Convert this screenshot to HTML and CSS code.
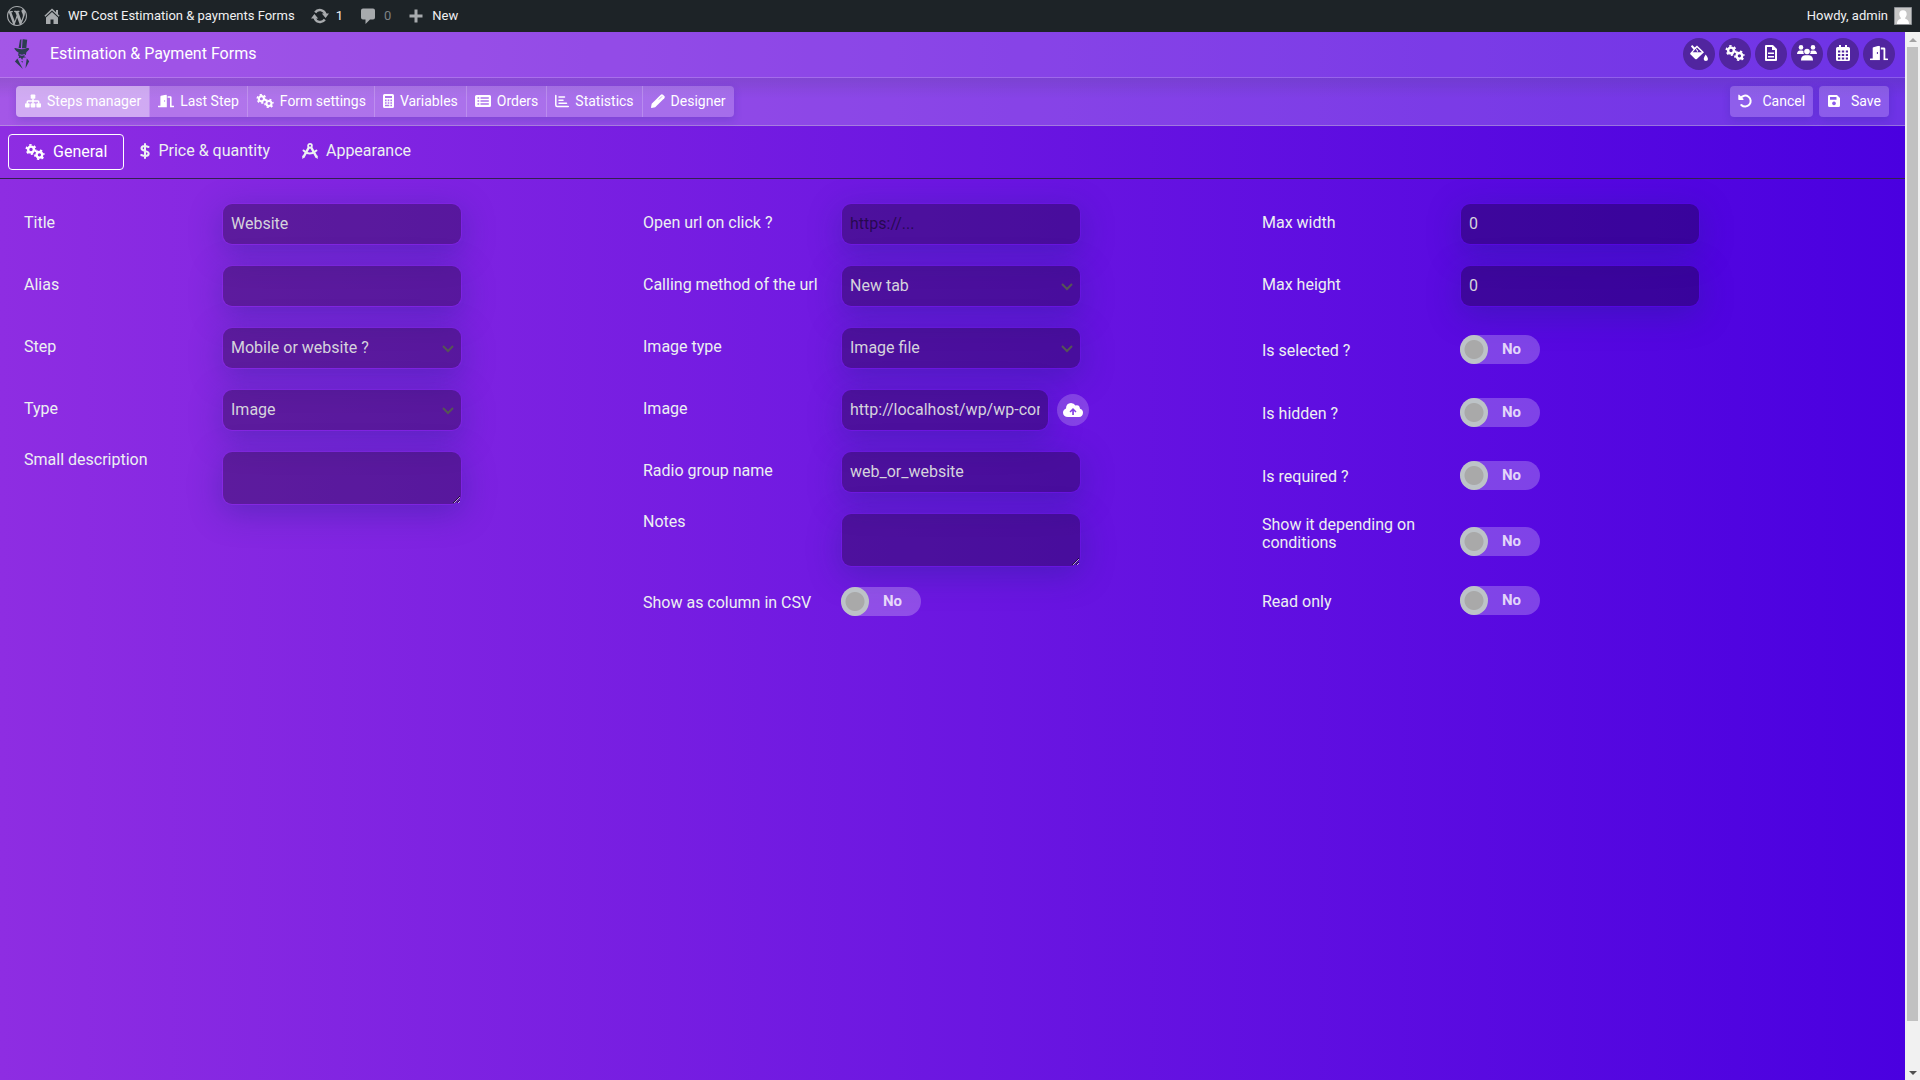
FILE: index.html
```html
<!DOCTYPE html>
<html lang="en">
<head>
<meta charset="utf-8">
<title>Estimation &amp; Payment Forms</title>
<link rel="stylesheet" href="styles.css">
</head>
<body>
<svg class="sprite" aria-hidden="true">
  <symbol id="gears" viewBox="0 0 20 16">
    <g fill="none" stroke="currentColor">
      <circle cx="6" cy="5.5" r="2.9" stroke-width="2.4"/>
      <circle cx="6" cy="5.5" r="4.6" stroke-width="1.8" stroke-dasharray="2.4 2.417"/>
      <circle cx="14.4" cy="10.8" r="2.8" stroke-width="2.3"/>
      <circle cx="14.4" cy="10.8" r="4.4" stroke-width="1.8" stroke-dasharray="2.3 2.308" stroke-dashoffset="2.3"/>
    </g>
  </symbol>
  <symbol id="door" viewBox="0 0 640 512">
    <path fill="currentColor" d="M624 448h-80V113.45C544 86.19 522.47 64 496 64H384v64h96v384h144c8.84 0 16-7.16 16-16v-32c0-8.84-7.16-16-16-16zM312.24 1.01l-192 49.74C105.99 54.44 96 67.54 96 82.51V448H16c-8.84 0-16 7.16-16 16v32c0 8.84 7.16 16 16 16h336V33.18c0-21.58-19.56-37.41-39.76-32.17zM264 288c-13.25 0-24-14.33-24-32s10.75-32 24-32 24 14.33 24 32-10.75 32-24 32z"/>
  </symbol>
</svg>

<nav class="adminbar" aria-label="Site">
  <a href="#" aria-label="About WordPress"><svg class="i20" viewBox="0 0 20 20"><path fill="currentColor" d="M20 10c0-5.51-4.49-10-10-10C4.48 0 0 4.49 0 10c0 5.52 4.48 10 10 10 5.51 0 10-4.48 10-10zM7.78 15.37L4.37 6.22c.55-.02 1.17-.08 1.17-.08.5-.06.44-1.13-.06-1.11 0 0-1.45.11-2.37.11-.18 0-.37 0-.58-.01C4.12 2.69 6.87 1.11 10 1.11c2.33 0 4.45.87 6.05 2.34-.68-.11-1.65.39-1.65 1.58 0 .74.45 1.36.9 2.1.35.61.55 1.36.55 2.46 0 1.49-1.4 5-1.4 5l-3.03-8.37c.54-.02.82-.17.82-.17.5-.05.44-1.25-.06-1.22 0 0-1.44.12-2.38.12-.87 0-2.33-.12-2.33-.12-.5-.03-.56 1.2-.06 1.22l.92.08 1.26 3.41zM17.41 10c.24-.64.74-1.87.43-4.25.7 1.29 1.05 2.71 1.05 4.25 0 3.29-1.73 6.24-4.4 7.78.97-2.59 1.94-5.2 2.92-7.78zM6.1 18.09C3.12 16.65 1.11 13.53 1.11 10c0-1.3.23-2.48.72-3.59C3.25 10.3 4.67 14.2 6.1 18.09zm4.03-6.63l2.58 6.98c-.86.29-1.76.45-2.71.45-.79 0-1.57-.11-2.29-.33.81-2.38 1.62-4.74 2.42-7.1z"/></svg></a>
  <a href="#"><svg class="i20" viewBox="0 0 20 20"><path fill="currentColor" d="M10 2.5l-7.6 7.2 1 1.1L10 4.6l6.6 6.2 1-1.1-1.6-1.5V4h-2v2.300zM4 11.5V18h4.500v-4.500h3V18H16v-6.500L10 6z"/></svg><span>WP Cost Estimation &amp; payments Forms</span></a>
  <a href="#"><svg class="i20" viewBox="0 0 20 20"><g fill="none" stroke="currentColor" stroke-width="2.500"><path d="M4.600 11.500A5.700 5.700 0 0 0 14.800 13.600"/><path d="M15.400 8.500A5.700 5.700 0 0 0 5.200 6.400"/></g><path fill="currentColor" d="M1 12.500L4.400 8l3.800 4.500zM19 7.500L15.600 12l-3.800-4.500z"/></svg><span>1</span></a>
  <a href="#" class="muted"><svg class="i20" viewBox="0 0 20 20"><path fill="currentColor" d="M5 2.500h10a2 2 0 0 1 2 2v7a2 2 0 0 1-2 2h-3L7.500 18v-4.500H5a2 2 0 0 1-2-2v-7a2 2 0 0 1 2-2z"/></svg><span>0</span></a>
  <a href="#"><svg class="i20" viewBox="0 0 20 20"><path fill="currentColor" d="M8.500 3.500h3v5h5v3h-5v5h-3v-5h-5v-3h5z"/></svg><span>New</span></a>
  <a href="#" class="account"><span>Howdy, admin</span><svg class="avatar" viewBox="0 0 18 18"><path fill="#c6c6c6" stroke="#8c8f94" d="M.5.5h17v17H.5z"/><path fill="#fff" d="M9 3.200c2.300 0 3.700 1.700 3.700 3.900 0 1.500-.6 2.800-1.500 3.600v1c2 .5 3.800 1.700 3.800 5.300H3c0-3.600 1.800-4.800 3.800-5.300v-1c-.9-.8-1.500-2.100-1.500-3.600C5.300 4.900 6.700 3.200 9 3.200z"/></svg></a>
</nav>

<div class="frame">
<div class="app">
  <header class="topbar">
    <svg class="logo" viewBox="0 0 16 30"><g fill="#2c3e50"><path d="M6 .8L7.500.3 7 9H4.600zM8.600.2Q11 0 13.200.8L12.300 9.300H8z"/><path d="M.2 9.500Q1 8.400 3 9.400q5.500 1.800 10-.4 3-.5 2 1.600-2.500 3.600-6.500 4Q3.500 14.400.2 9.500z"/><path d="M4.500 13.500l8-1-.6 3.200-2.300 1.200 2.600 1.300-3.200.6L8.200 21l-1.400-2.200-2.300.4.700-1.800-1-1z"/><path d="M3.400 19.500L.9 22.500l8 7.400-2.800-5zM12.800 19.500l2.400 2.800-3.700 7 .6-5.300zM7.300 22h1.500l-.5 2z"/></g><path fill="none" stroke="#9f52e8" d="M5.500 15.700l2.500.6 2.800-.8"/></svg>
    <h1>Estimation &amp; Payment Forms</h1>
    <div class="shortcuts">
      <button type="button" aria-label="Design"><svg class="i18" viewBox="0 0 18 16"><path fill="currentColor" fill-rule="evenodd" d="M1 1.200L2.200 0 4.700 2.500 7 .4l7 6.800L6.900 14q-.9.700-1.800 0L.6 9.600q-.9-1 0-1.900l2.900-3.300-2.500-3zM5.800 3.700L2.700 7.300h9.200L7 2.600l-1 1 2.300 2.300-1.100 1.100zM15.700 9.500q2.300 3 2.300 4.400 0 1.900-2.200 2-2-.1-2.100-2 0-1.400 2-4.400z"/></svg></button>
      <button type="button" aria-label="Settings"><svg class="i20" viewBox="0 0 20 16"><use href="#gears"/></svg></button>
      <button type="button" aria-label="Documents"><svg class="i16" viewBox="0 0 16 16"><path fill="none" stroke="currentColor" stroke-width="2" stroke-linejoin="round" d="M3 1h6.500L13 4.500V15H3z"/><path fill="currentColor" d="M9 1v4h4zM5 7.500h6V9H5zM5 11h6v1.500H5z"/></svg></button>
      <button type="button" aria-label="Customers"><svg class="i20" viewBox="0 0 20 16"><g fill="currentColor"><circle cx="4" cy="2.400" r="2.300"/><circle cx="16" cy="2.400" r="2.300"/><circle cx="10" cy="6.500" r="2.800"/><path d="M0 9q.2-3.500 3-3.600h2q.8 0 1.500.5Q6 7.500 7 9zM20 9q-.2-3.500-3-3.600h-2q-.8 0-1.500.5Q14 7.500 13 9zM4 15.500q0-5 4-5.200h4q4 .2 4 5.200z"/></g></svg></button>
      <button type="button" aria-label="Calendar"><svg class="i16" viewBox="0 0 16 16"><path fill="currentColor" fill-rule="evenodd" d="M4 0h2v2h4V0h2v2h1.500Q15 2 15 3.500v11q0 1.500-1.500 1.500h-11Q1 16 1 14.500v-11Q1 2 2.500 2H4zM3 5.500v2h2.300v-2zm3.800 0v2h2.400v-2zm4 0v2H13v-2zM3 9v2h2.300V9zm3.800 0v2h2.400V9zm4 0v2H13V9zM3 12.500v2h2.300v-2zm3.800 0v2h2.400v-2zm4 0v2H13v-2z"/></svg></button>
      <button type="button" aria-label="Exit"><svg class="i18" viewBox="0 0 640 512"><use href="#door"/></svg></button>
    </div>
  </header>

  <div class="toolbar">
    <div class="group">
      <button type="button" class="active"><svg class="i16" viewBox="0 0 16 14"><g fill="currentColor"><rect x="5.700" y=".5" width="4.600" height="4.300" rx=".8"/><rect y="9.200" width="4.600" height="4.300" rx="1"/><rect x="5.700" y="9.200" width="4.600" height="4.300" rx="1"/><rect x="11.400" y="9.200" width="4.600" height="4.300" rx="1"/></g><path fill="none" stroke="currentColor" stroke-width="1.500" d="M8 4.500v5M2.300 9.500V7.800q0-.9.900-.9h9.600q.9 0 .9.900v1.700"/></svg>Steps manager</button>
      <button type="button"><svg class="i16" viewBox="0 0 640 512"><use href="#door"/></svg>Last Step</button>
      <button type="button"><svg class="i18" viewBox="0 0 20 16"><use href="#gears"/></svg>Form settings</button>
      <button type="button"><svg class="i11" viewBox="0 0 11 14"><path fill="currentColor" fill-rule="evenodd" d="M1.500 0h8Q11 0 11 1.500v11Q11 14 9.500 14h-8Q0 14 0 12.500v-11Q0 0 1.500 0zM2 2v2h7V2zM2 5.600v1.600h1.600V5.600zm2.700 0v1.600h1.600V5.600zm2.700 0v1.600H9V5.600zM2 8.200v1.600h1.600V8.200zm2.700 0v1.600h1.600V8.200zm2.700 0v1.600H9V8.200zM2 10.800v1.400h4.300v-1.400zm5.400 0v1.400H9v-1.400z"/></svg>Variables</button>
      <button type="button"><svg class="i16" viewBox="0 0 16 14"><path fill="currentColor" fill-rule="evenodd" d="M1.500 1h13Q16 1 16 2.500v9q0 1.500-1.500 1.500h-13Q0 13 0 11.500v-9Q0 1 1.500 1zM2.500 3.200v1.600h1.700V3.200zm3 0v1.600h8.300V3.200zm-3 3v1.600h1.700V6.200zm3 0v1.600h8.300V6.200zm-3 3v1.600h1.700V9.200zm3 0v1.600h8.300V9.200z"/></svg>Orders</button>
      <button type="button"><svg class="i14" viewBox="0 0 14 14"><path fill="none" stroke="currentColor" stroke-width="1.500" stroke-linecap="round" d="M.8 1.500V11q0 1.500 1.500 1.500h11M4 3h5.500M4 6.200h4M4 9.300h7.500"/></svg>Statistics</button>
      <button type="button"><svg class="i14" viewBox="0 0 14 14"><path fill="currentColor" d="M.7 9.700L9.800.7q1.100-1 2.200 0l1.300 1.300q1 1.100 0 2.200L4.200 13.300.6 14q-.7 0-.6-.7z"/><path stroke="#a973e8" stroke-width=".7" d="M7.800 5.600l3.200-3.200" fill="none"/></svg>Designer</button>
    </div>
    <div class="actions">
      <button type="button"><svg class="i14" viewBox="0 0 14 14"><path fill="none" stroke="currentColor" stroke-width="2" stroke-linecap="round" d="M2.600 4A5.500 5.500 0 1 1 3.300 11"/><path fill="currentColor" d="M.3 1q.7-.8 1.200 0l4 4q.5.800-.5.900H.9Q.3 5.900.3 5.200z"/></svg>Cancel</button>
      <button type="button"><svg class="i14" viewBox="0 0 14 14"><path fill="currentColor" fill-rule="evenodd" d="M2 1h8l3 3v7.500q0 1.500-1.500 1.500h-9Q1 13 1 11.500V2.500Q1 1 2 1zm1 2v2.800h6.500V3zM7 7.500a1.900 1.900 0 1 0 .01 0z"/></svg>Save</button>
    </div>
  </div>

  <nav class="tabs" aria-label="Item settings">
    <a href="#" class="current"><svg class="i20" viewBox="0 0 20 16"><use href="#gears"/></svg>General</a>
    <a href="#"><svg class="i10" viewBox="0 0 10 16"><path fill="none" stroke="currentColor" stroke-width="2" stroke-linecap="round" d="M5 1v14M8.500 4Q6 3 4.500 3 1.500 3.200 1.500 5.300 1.500 7 5 7.900q3.700.9 3.700 2.800Q8.500 13 5.500 13q-2 0-4.200-1"/></svg>Price &amp; quantity</a>
    <a href="#"><svg class="i16" viewBox="0 0 16 16"><g fill="none" stroke="currentColor"><circle cx="8" cy="2.800" r="1.900" stroke-width="1.800"/><path stroke-width="2.500" d="M6.800 4.500L1.500 14M9.200 4.500l5.300 9.500"/><path stroke-width="1.900" stroke-linecap="round" d="M1.500 7.500Q7.500 13.500 14.500 7.500"/></g><path fill="currentColor" d="M.3 12.500l2.800 1.400L.3 16zM15.700 12.500l-2.800 1.400 2.800 2.100z"/></svg>Appearance</a>
  </nav>

  <form class="form">
    <div class="col">
      <div class="row"><label for="title">Title</label><input class="field" id="title" type="text" value="Website"></div>
      <div class="row"><label for="alias">Alias</label><input class="field" id="alias" type="text"></div>
      <div class="row"><label for="step">Step</label><select class="field" id="step"><option>Mobile or website ?</option></select></div>
      <div class="row"><label for="type">Type</label><select class="field" id="type"><option>Image</option></select></div>
      <div class="row area"><label for="desc">Small description</label><textarea class="field" id="desc"></textarea></div>
    </div>
    <div class="col">
      <div class="row"><label for="url">Open url on click ?</label><input class="field" id="url" type="text" placeholder="https://..."></div>
      <div class="row"><label for="method">Calling method of the url</label><select class="field" id="method"><option>New tab</option></select></div>
      <div class="row"><label for="imgtype">Image type</label><select class="field" id="imgtype"><option>Image file</option></select></div>
      <div class="row"><label for="image">Image</label><input class="field short" id="image" type="text" value="http://localhost/wp/wp-content/uploads/website.png"><button type="button" class="upload" aria-label="Upload image"><svg class="i20" viewBox="0 0 20 14"><path fill="currentColor" fill-rule="evenodd" d="M5 14Q.2 13.800 0 9.700 0 6.800 3 5.500 3 .2 8 0q3 0 4.500 2.500 4-1 4.500 3.200 3 .8 3 4Q19.800 13.800 16 14zM10 5L6.500 8.500l1 1 1.700-1.600V12h1.700V7.900l1.600 1.600 1-1z"/></svg></button></div>
      <div class="row"><label for="group">Radio group name</label><input class="field" id="group" type="text" value="web_or_website"></div>
      <div class="row area"><label for="notes">Notes</label><textarea class="field" id="notes"></textarea></div>
      <div class="row toggle"><label for="csv">Show as column in CSV</label><span class="switch"><input type="checkbox" id="csv"><span>No</span></span></div>
    </div>
    <div class="col">
      <div class="row"><label for="maxw">Max width</label><input class="field" id="maxw" type="text" value="0"></div>
      <div class="row"><label for="maxh">Max height</label><input class="field" id="maxh" type="text" value="0"></div>
      <div class="row toggle"><label for="selected">Is selected ?</label><span class="switch"><input type="checkbox" id="selected"><span>No</span></span></div>
      <div class="row toggle"><label for="hidden">Is hidden ?</label><span class="switch"><input type="checkbox" id="hidden"><span>No</span></span></div>
      <div class="row toggle"><label for="required">Is required ?</label><span class="switch"><input type="checkbox" id="required"><span>No</span></span></div>
      <div class="row toggle two-line"><label for="cond">Show it depending on conditions</label><span class="switch"><input type="checkbox" id="cond"><span>No</span></span></div>
      <div class="row toggle"><label for="readonly">Read only</label><span class="switch"><input type="checkbox" id="readonly"><span>No</span></span></div>
    </div>
  </form>
</div>
<div class="scrollbar" aria-hidden="true">
  <svg viewBox="0 0 15 15"><path fill="#a3a3a3" d="M4 10l4-4 4 4z"/></svg>
  <div class="thumb"></div>
  <svg viewBox="0 0 15 15"><path fill="#505050" d="M4 6l4 4 4-4z"/></svg>
</div>
</div>
</body>
</html>
```
FILE: styles.css
```css
* { box-sizing: border-box; }
body {
  margin: 0;
  min-height: 100vh;
  display: flex;
  flex-direction: column;
  font: 16px/18px Roboto, sans-serif;
  color: #ecf0f1;
}
button, input, select, textarea { font: inherit; color: inherit; }
a { color: inherit; text-decoration: none; }
button { border: 0; padding: 0; cursor: pointer; }
svg { display: block; flex: none; }
.sprite { position: absolute; width: 0; height: 0; }
.i10 { width: 10px; height: 16px; }
.i11 { width: 11px; height: 14px; }
.i14 { width: 14px; height: 14px; }
.i16 { width: 16px; height: 16px; }
.i18 { width: 18px; height: 16px; }
.i20 { width: 20px; height: 20px; }

/* Site admin bar */
.adminbar {
  height: 32px;
  display: flex;
  align-items: center;
  gap: 15px;
  padding: 0 8px 0 7px;
  background: #1d2327;
  color: #f0f0f1;
  font-size: 13px;
}
.adminbar a { display: flex; align-items: center; gap: 6px; }
.adminbar .i20 { color: #a7aaad; }
.adminbar .muted span { color: #7d8185; }
.adminbar .account { margin-left: auto; }
.avatar { width: 18px; height: 18px; }

.frame { flex: 1; display: flex; }
.app {
  flex: 1;
  min-width: 0;
  background: linear-gradient(to right, #8e2de2, #4a00e0);
}

/* Header */
.topbar {
  height: 46px;
  display: flex;
  align-items: center;
  padding: 0 10px 1px 14px;
  background: rgba(255, 255, 255, .2);
  border-bottom: 1px solid rgba(255, 255, 255, .2);
}
.logo { width: 16px; height: 30px; margin-right: 20px; }
.topbar h1 { margin: 0; font-size: 16px; font-weight: 400; color: #fff; }
.shortcuts { margin-left: auto; display: flex; gap: 4px; }
.shortcuts button {
  width: 32px;
  height: 32px;
  display: grid;
  place-items: center;
  padding-bottom: 2px;
  border-radius: 50%;
  background: #51259f;
  color: #fff;
}

.toolbar {
  display: flex;
  justify-content: space-between;
  align-items: center;
  height: 48px;
  padding: 0 16px;
  background: linear-gradient(rgba(60, 60, 100, .16), rgba(60, 60, 100, 0) 20px), rgba(255, 255, 255, .2);
  border-bottom: 1px solid rgba(255, 255, 255, .3);
  font-size: 14px;
}
.toolbar button {
  height: 31px;
  display: flex;
  align-items: center;
  gap: 6px;
  padding: 0 8px 1px;
  background: rgba(255, 255, 255, .2);
  color: #fff;
}
.group, .actions button { border-radius: 4px; box-shadow: 0 3px 8px rgba(31, 38, 135, .2); }
.group { display: flex; overflow: hidden; }
.group button + button { border-left: 1px solid rgba(255, 255, 255, .2); }
.group .active { padding: 0 8px 1px 9px; background: rgba(255, 255, 255, .5); }
.actions { display: flex; gap: 6px; }
.toolbar .actions button { gap: 10px; }

/* Tabs */
.tabs {
  display: flex;
  align-items: center;
  height: 53px;
  padding: 0 8px;
  border-bottom: 1px solid #34224f;
}
.tabs a {
  display: flex;
  align-items: center;
  gap: 8px;
  height: 36px;
  padding: 0 15px 2px;
  border: 1px solid transparent;
  border-radius: 4px;
}
.tabs .current { padding: 0 16px; border-color: #fff; color: #fff; }

/* Item form */
.form {
  display: grid;
  grid-template-columns: repeat(3, 1fr);
  padding: 24px;
}
.row { display: flex; align-items: center; margin-bottom: 20px; }
.row label { width: 198px; padding: 0 20px 2px 0; flex: none; }
.field {
  width: 240px;
  height: 42px;
  padding: 0 8px;
  border: 1px solid transparent;
  border-radius: 10px;
  background: rgba(0, 0, 0, .3) padding-box;
  box-shadow: 0 8px 32px rgba(31, 38, 135, .37);
  color: #d5d3dc;
  outline: 0;
}
input.field { padding-bottom: 2px; }
.field::placeholder { color: rgba(0, 0, 0, .5); }
.field.short { width: 208px; margin-right: 8px; }
select.field {
  appearance: none;
  background:
    url("data:image/svg+xml,%3Csvg xmlns='http://www.w3.org/2000/svg' width='12' height='8'%3E%3Cpath d='M1 1l5 5 5-5' fill='none' stroke='%23555' stroke-width='2'/%3E%3C/svg%3E") right 7px top 17px no-repeat padding-box,
    rgba(0, 0, 0, .3) padding-box;
}
.row.area { align-items: flex-start; margin-bottom: 12px; }
textarea.field { height: 54px; }
.upload {
  width: 32px;
  height: 32px;
  display: grid;
  place-items: center;
  border-radius: 50%;
  background: rgba(255, 255, 255, .2);
  color: #fff;
}
.row.toggle { align-items: flex-start; height: 43px; padding-top: 8px; }
.row.toggle label { padding: 7px 20px 0 0; }
.row.two-line { height: 42px; padding-top: 0; }
.row.two-line label { padding-top: 0; }
.row.two-line .switch { margin-top: 11px; }
.switch {
  width: 80px;
  height: 29px;
  display: flex;
  border-radius: 15px;
  background: rgba(255, 255, 255, .24);
  font-size: 15px;
  font-weight: 700;
  line-height: 28px;
  color: rgba(255, 255, 255, .8);
}
.switch input {
  appearance: none;
  width: 28px;
  height: 29px;
  margin: 0 14px 0 0;
  border-radius: 50%;
  background: radial-gradient(circle, #a9a9a9 9px, #bdc3c7 10px);
}

/* Scroll track beside the form */
.scrollbar {
  width: 15px;
  display: flex;
  flex-direction: column;
  background: #f1f1f1;
}
.scrollbar svg { width: 15px; height: 15px; }
.thumb { flex: 1; margin: 0 2px 44px; background: #c1c1c1; }
```
